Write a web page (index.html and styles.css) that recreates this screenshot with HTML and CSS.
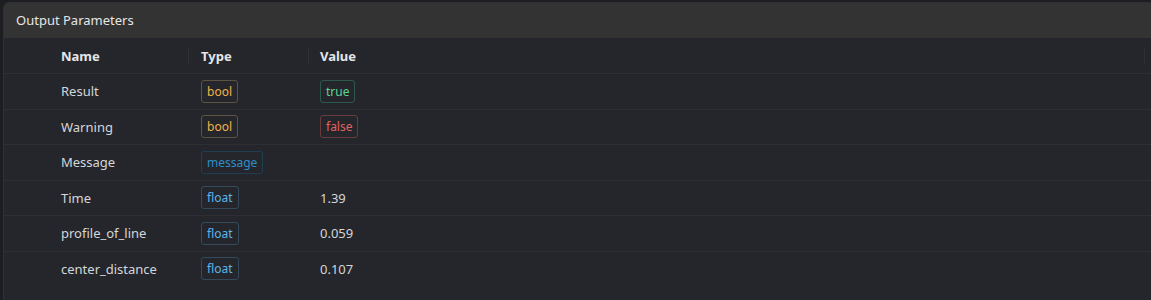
FILE: index.html
```html
<!DOCTYPE html>
<html>
<head>
<meta charset="utf-8">
<link rel="stylesheet" href="styles.css">
</head>
<body>
<div class="panel">
  <div class="panel-header">Output Parameters</div>
  <div class="table">
    <div class="row head">
      <div class="cell c0"></div>
      <div class="cell c1">Name</div>
      <div class="cell c2 sep">Type</div>
      <div class="cell c3 sep">Value</div>
      <div class="cell c4 sep"></div>
    </div>
    <div class="row">
      <div class="cell c0"></div>
      <div class="cell c1">Result</div>
      <div class="cell c2"><span class="tag t-bool">bool</span></div>
      <div class="cell c3"><span class="tag t-true">true</span></div>
      <div class="cell c4"></div>
    </div>
    <div class="row">
      <div class="cell c0"></div>
      <div class="cell c1">Warning</div>
      <div class="cell c2"><span class="tag t-bool">bool</span></div>
      <div class="cell c3"><span class="tag t-false">false</span></div>
      <div class="cell c4"></div>
    </div>
    <div class="row">
      <div class="cell c0"></div>
      <div class="cell c1">Message</div>
      <div class="cell c2"><span class="tag t-msg">message</span></div>
      <div class="cell c3"></div>
      <div class="cell c4"></div>
    </div>
    <div class="row">
      <div class="cell c0"></div>
      <div class="cell c1">Time</div>
      <div class="cell c2"><span class="tag t-float">float</span></div>
      <div class="cell c3">1.39</div>
      <div class="cell c4"></div>
    </div>
    <div class="row">
      <div class="cell c0"></div>
      <div class="cell c1">profile_of_line</div>
      <div class="cell c2"><span class="tag t-float">float</span></div>
      <div class="cell c3">0.059</div>
      <div class="cell c4"></div>
    </div>
    <div class="row last">
      <div class="cell c0"></div>
      <div class="cell c1">center_distance</div>
      <div class="cell c2"><span class="tag t-float">float</span></div>
      <div class="cell c3">0.107</div>
      <div class="cell c4"></div>
    </div>
  </div>
</div>
</body>
</html>
```
FILE: styles.css
```css
html, body {
  margin: 0;
  padding: 0;
  background: #1d1e21;
  height: 300px;
  overflow: hidden;
}
body {
  font-family: "Noto Sans", "Open Sans", sans-serif;
  font-size: 13px;
  color: #d4d6da;
}
.panel {
  margin: 2px 0 0 3px;
  width: 1150px;
  height: 297px;
  background: #25262b;
  border: 1px solid #2f3034;
  border-bottom: none;
  border-radius: 6px 6px 0 0;
  overflow: hidden;
}
.panel-header {
  height: 35px;
  line-height: 35px;
  background: #333333;
  padding-left: 12px;
  color: #e6e6e6;
  font-size: 13px;
}
.table {
  display: flex;
  flex-direction: column;
}
.row {
  display: flex;
  height: 34.5px;
  align-items: center;
  border-bottom: 1px solid #2e2f34;
}
.row.head {
  height: 35px;
  font-weight: 700;
  color: #e4e6ea;
}
.row.last {
  border-bottom: none;
}
.cell {
  height: 100%;
  display: flex;
  align-items: center;
  padding-left: 12px;
  box-sizing: border-box;
  position: relative;
}
.c0 { width: 45px; padding: 0; }
.c1 { width: 140px; }
.c2 { width: 119px; }
.c3 { width: 837px; }
.c4 { flex: 1; padding: 0; }
.head .sep::before {
  content: "";
  position: absolute;
  left: -1px;
  top: 10px;
  bottom: 9px;
  width: 1px;
  background: #2f3035;
}
.head .c3::before {
  left: 0;
}
.tag {
  display: inline-flex;
  align-items: center;
  height: 21px;
  padding: 0 5px;
  border: 1px solid;
  border-radius: 3px;
  font-size: 12px;
}
.t-bool {
  color: #f0b34a;
  border-color: #5e5240;
}
.t-true {
  color: #5ad592;
  border-color: #2c5a4a;
}
.t-false {
  color: #e2615f;
  border-color: #6b3a3c;
}
.t-msg {
  color: #2d8fc9;
  border-color: #1f3e52;
}
.t-float {
  color: #5cb5ea;
  border-color: #34495a;
}
```
